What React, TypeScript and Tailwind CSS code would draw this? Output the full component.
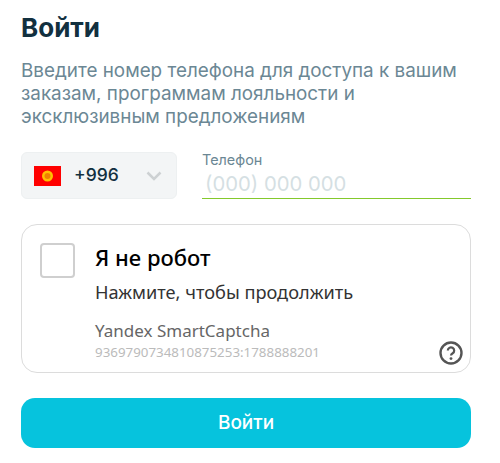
export default function App() {
  return (
    <div className="min-h-screen bg-white pr-[29px] pl-[21px] pt-[10px] font-['Inter',sans-serif]">
      <h1 className="text-[26px] leading-[36px] font-bold text-[#12303f]">Войти</h1>
      <p className="mt-[13px] text-[18.85px] leading-[23px] text-[#6b8794]">
        Введите номер телефона для доступа к вашим заказам, программам лояльности и эксклюзивным предложениям
      </p>

      <div className="mt-[24px] flex gap-[25px]">
        {/* country select */}
        <div className="flex h-[47px] w-[156px] items-center rounded-[6px] border border-[#edf0f1] bg-[#f3f5f6] pl-[12px]">
          <svg width="27" height="20" viewBox="0 0 27 20">
            <rect width="27" height="20" fill="#ff0000" />
            <circle cx="13.5" cy="10" r="5.5" fill="#ffc000" />
            <circle cx="13.5" cy="10" r="3" fill="#f08000" />
          </svg>
          <span className="ml-[13px] text-[17.5px] font-medium text-[#12303f]">+996</span>
          <svg className="ml-[27px]" width="16" height="10" viewBox="0 0 16 10" fill="none">
            <path d="M1.5 1.5 8 8l6.5-6.5" stroke="#cdd1d3" strokeWidth="2.5" />
          </svg>
        </div>

        {/* phone input */}
        <div className="flex h-[47px] flex-1 flex-col border-b border-b-[#84c92c]">
          <span className="text-[14.4px] leading-[16px] text-[#6b8794]">Телефон</span>
          <span className="mt-[5px] pl-[3px] text-[20.3px] leading-[22px] text-[#d5dfe3]">(000) 000 000</span>
        </div>
      </div>

      {/* captcha */}
      <div className="relative mt-[25px] flex h-[149px] rounded-[16px] border border-[#dcdcdc] pt-[17px] pl-[18px] font-['Noto_Sans',sans-serif]">
        <div className="mt-[1px] h-[35px] w-[35px] rounded-[4px] border-2 border-[#cfcfcf]" />
        <div className="ml-[20px]">
          <div className="text-[22px] leading-[30px] font-medium text-black">Я не робот</div>
          <div className="mt-[9px] text-[18.2px] leading-[22px] text-[#333]">Нажмите, чтобы продолжить</div>
          <div className="mt-[17px] text-[17px] leading-[22px] text-[#666]">Yandex SmartCaptcha</div>
          <div className="mt-[2px] text-[13.35px] leading-[16px] text-[#bbb]">9369790734810875253:1788888201</div>
        </div>
        <svg className="absolute right-[7px] bottom-[7px]" width="24" height="24" viewBox="0 0 24 24" fill="none">
          <circle cx="12" cy="12" r="10.5" stroke="#555" strokeWidth="2.4" />
          <path d="M8.8 9.6a3.2 3.2 0 1 1 4.9 2.7c-1 .6-1.7 1.2-1.7 2.2" stroke="#555" strokeWidth="2.2" />
          <circle cx="12" cy="17.6" r="1.4" fill="#555" />
        </svg>
      </div>

      <button className="mt-[25px] h-[50px] w-full rounded-[14px] bg-[#06c3dd] text-[19px] font-medium text-white">Войти</button>
    </div>
  );
}
